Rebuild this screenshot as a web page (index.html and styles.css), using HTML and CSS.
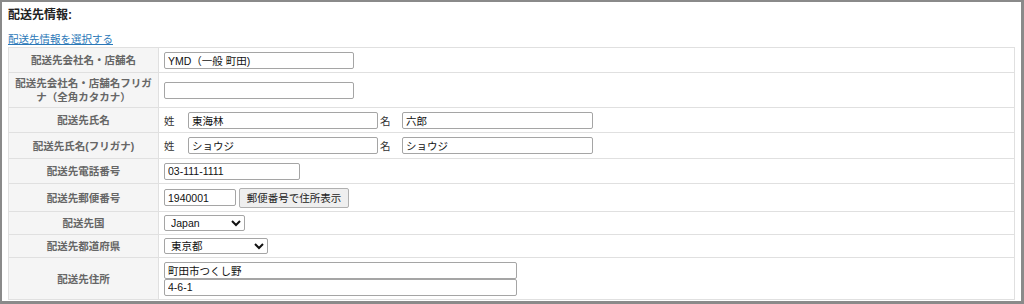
FILE: index.html
```html
<!DOCTYPE html>
<html lang="ja">
<head>
<meta charset="utf-8">
<title>配送先情報</title>
<link rel="stylesheet" href="styles.css">
</head>
<body>
<div class="frame">
  <h2 class="title">配送先情報:</h2>
  <a class="select-link" href="#">配送先情報を選択する</a>
  <table class="form-table">
    <tr class="h25">
      <th>配送先会社名・店舗名</th>
      <td><input class="w190" type="text" value="YMD（一般 町田)"></td>
    </tr>
    <tr class="h35">
      <th>配送先会社名・店舗名フリガナ（全角カタカナ）</th>
      <td><input class="w190" type="text" value=""></td>
    </tr>
    <tr class="h25">
      <th>配送先氏名</th>
      <td><span class="sei">姓</span><input class="w190" type="text" value="東海林"><span class="mei">名</span><input class="w191" type="text" value="六郎"></td>
    </tr>
    <tr class="h26">
      <th>配送先氏名(フリガナ)</th>
      <td><span class="sei">姓</span><input class="w190" type="text" value="ショウジ"><span class="mei">名</span><input class="w191" type="text" value="ショウジ"></td>
    </tr>
    <tr class="h25">
      <th>配送先電話番号</th>
      <td><input class="w136" type="text" value="03-111-1111"></td>
    </tr>
    <tr class="h28">
      <th>配送先郵便番号</th>
      <td><input class="w72" type="text" value="1940001"><button class="zip-btn" type="button">郵便番号で住所表示</button></td>
    </tr>
    <tr class="h23">
      <th>配送先国</th>
      <td><select class="sel81"><option>Japan</option></select></td>
    </tr>
    <tr class="h23">
      <th>配送先都道府県</th>
      <td><select class="sel104"><option>東京都</option></select></td>
    </tr>
    <tr class="h42">
      <th>配送先住所</th>
      <td><input class="w353 block" type="text" value="町田市つくし野"><input class="w353 block" type="text" value="4-6-1"></td>
    </tr>
  </table>
</div>
</body>
</html>
```

FILE: styles.css
```css
html, body {
  margin: 0;
  padding: 0;
  background: #ffffff;
}

body {
  font-family: "Liberation Sans", "Noto Sans CJK JP", sans-serif;
  color: #222;
}

.frame {
  box-sizing: border-box;
  width: 1024px;
  height: 304px;
  border-style: solid;
  border-color: #8a8a8a;
  border-width: 2px 3px 3px 2px;
  padding: 4px 6px 0 6px;
  overflow: hidden;
  background: #fff;
}

.title {
  margin: 0;
  font-size: 12px;
  line-height: 18px;
  font-weight: bold;
  color: #222;
}

.select-link {
  display: block;
  margin-top: 8px;
  font-size: 10.5px;
  line-height: 15px;
  color: #2a78b8;
  text-decoration: underline;
}

.form-table {
  width: 1007px;
  border-collapse: collapse;
  border: 1px solid #e0e0e0;
  font-size: 10.5px;
}

.form-table th,
.form-table td {
  border: 1px solid #e0e0e0;
  padding: 0;
  vertical-align: middle;
}

.form-table th {
  width: 150px;
  box-sizing: border-box;
  background: #f5f5f5;
  color: #666;
  font-weight: bold;
  text-align: center;
  line-height: 14px;
  padding: 0 4px;
}

.form-table td {
  padding-left: 5px;
  background: #fff;
}

.h25 { height: 25px; }
.h35 { height: 35px; }
.h26 { height: 26px; }
.h28 { height: 28px; }
.h23 { height: 23px; }
.h42 { height: 42px; }

.form-table input {
  box-sizing: border-box;
  height: 17px;
  border: 1px solid #a5a5a5;
  border-radius: 2px;
  padding: 0 3px;
  margin: 0;
  font-family: "Liberation Sans", "Noto Sans CJK JP", sans-serif;
  font-size: 10.5px;
  color: #111;
  vertical-align: middle;
  background: #fff;
}

.form-table input.block {
  display: block;
}

.w190 { width: 190px; }
.w191 { width: 191px; }
.w136 { width: 136px; }
.w72 { width: 72px; }
.w353 { width: 353px; }

.sei {
  display: inline-block;
  width: 24px;
  vertical-align: middle;
  color: #333;
}

.mei {
  display: inline-block;
  width: 24px;
  padding-left: 2px;
  box-sizing: border-box;
  vertical-align: middle;
  color: #333;
}

.zip-btn {
  box-sizing: border-box;
  height: 20px;
  width: 110px;
  margin: 0 0 0 3px;
  padding: 0 4px;
  border: 1px solid #b0b0b0;
  border-radius: 2px;
  background: #efefef;
  font-family: "Liberation Sans", "Noto Sans CJK JP", sans-serif;
  font-size: 10.5px;
  color: #222;
  vertical-align: middle;
}

.form-table select {
  box-sizing: border-box;
  height: 16px;
  margin: 0;
  padding: 0 0 0 2px;
  font-family: "Liberation Sans", "Noto Sans CJK JP", sans-serif;
  font-size: 10.5px;
  color: #111;
  border: 1px solid #a5a5a5;
  border-radius: 2px;
  background: #fff;
  vertical-align: middle;
}

.sel81 { width: 81px; }
.sel104 { width: 104px; }
```
